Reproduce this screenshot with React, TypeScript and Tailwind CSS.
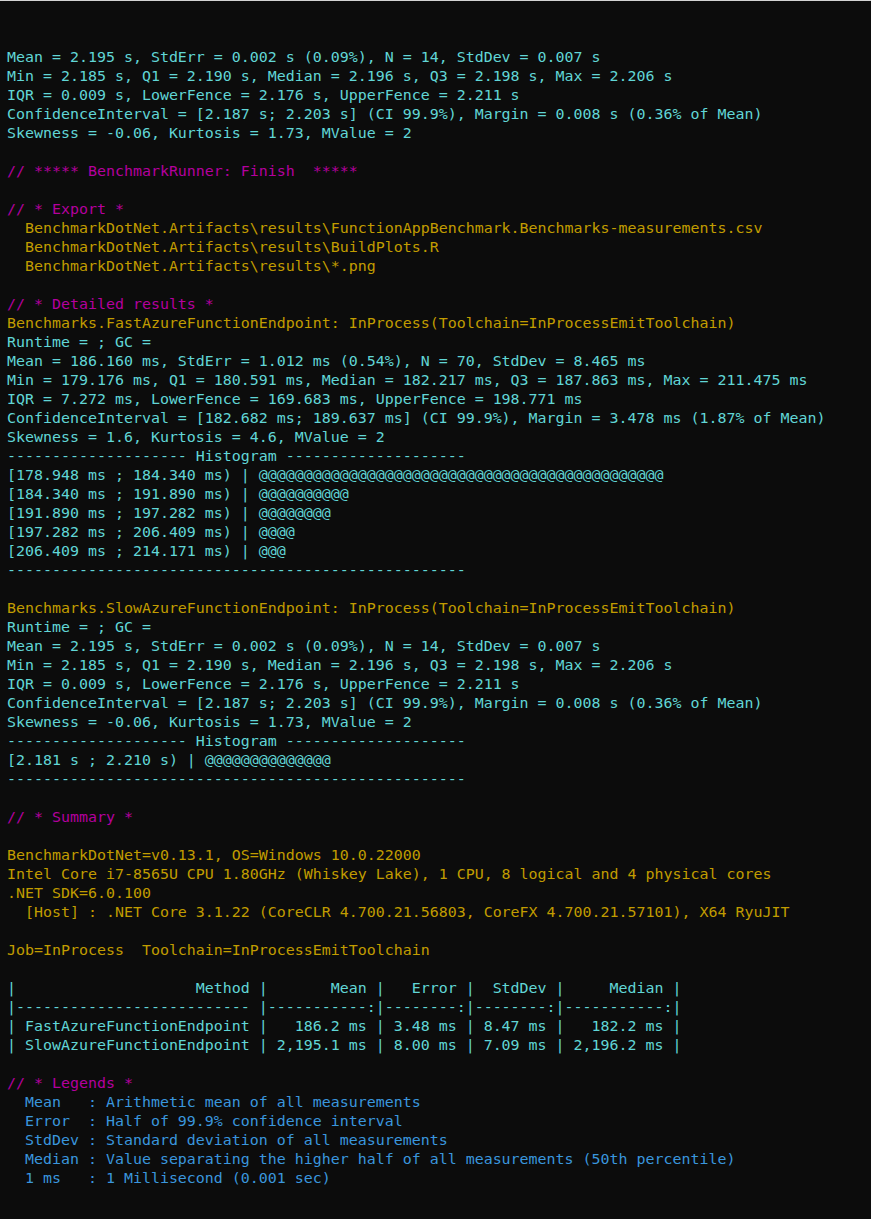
import React from "react";

const C = "text-[#61d6d6]";
const M = "text-[#b4009e]";
const Y = "text-[#c19c00]";
const B = "text-[#3a96dd]";

type L = [string, string];

const lines: L[] = [
  [C, "Mean = 2.195 s, StdErr = 0.002 s (0.09%), N = 14, StdDev = 0.007 s"],
  [C, "Min = 2.185 s, Q1 = 2.190 s, Median = 2.196 s, Q3 = 2.198 s, Max = 2.206 s"],
  [C, "IQR = 0.009 s, LowerFence = 2.176 s, UpperFence = 2.211 s"],
  [C, "ConfidenceInterval = [2.187 s; 2.203 s] (CI 99.9%), Margin = 0.008 s (0.36% of Mean)"],
  [C, "Skewness = -0.06, Kurtosis = 1.73, MValue = 2"],
  [C, ""],
  [M, "// ***** BenchmarkRunner: Finish  *****"],
  [C, ""],
  [M, "// * Export *"],
  [Y, "  BenchmarkDotNet.Artifacts\\results\\FunctionAppBenchmark.Benchmarks-measurements.csv"],
  [Y, "  BenchmarkDotNet.Artifacts\\results\\BuildPlots.R"],
  [Y, "  BenchmarkDotNet.Artifacts\\results\\*.png"],
  [C, ""],
  [M, "// * Detailed results *"],
  [Y, "Benchmarks.FastAzureFunctionEndpoint: InProcess(Toolchain=InProcessEmitToolchain)"],
  [C, "Runtime = ; GC = "],
  [C, "Mean = 186.160 ms, StdErr = 1.012 ms (0.54%), N = 70, StdDev = 8.465 ms"],
  [C, "Min = 179.176 ms, Q1 = 180.591 ms, Median = 182.217 ms, Q3 = 187.863 ms, Max = 211.475 ms"],
  [C, "IQR = 7.272 ms, LowerFence = 169.683 ms, UpperFence = 198.771 ms"],
  [C, "ConfidenceInterval = [182.682 ms; 189.637 ms] (CI 99.9%), Margin = 3.478 ms (1.87% of Mean)"],
  [C, "Skewness = 1.6, Kurtosis = 4.6, MValue = 2"],
  [C, "-------------------- Histogram --------------------"],
  [C, "[178.948 ms ; 184.340 ms) | " + "@".repeat(45)],
  [C, "[184.340 ms ; 191.890 ms) | " + "@".repeat(10)],
  [C, "[191.890 ms ; 197.282 ms) | " + "@".repeat(8)],
  [C, "[197.282 ms ; 206.409 ms) | " + "@".repeat(4)],
  [C, "[206.409 ms ; 214.171 ms) | " + "@".repeat(3)],
  [C, "-".repeat(51)],
  [C, ""],
  [Y, "Benchmarks.SlowAzureFunctionEndpoint: InProcess(Toolchain=InProcessEmitToolchain)"],
  [C, "Runtime = ; GC = "],
  [C, "Mean = 2.195 s, StdErr = 0.002 s (0.09%), N = 14, StdDev = 0.007 s"],
  [C, "Min = 2.185 s, Q1 = 2.190 s, Median = 2.196 s, Q3 = 2.198 s, Max = 2.206 s"],
  [C, "IQR = 0.009 s, LowerFence = 2.176 s, UpperFence = 2.211 s"],
  [C, "ConfidenceInterval = [2.187 s; 2.203 s] (CI 99.9%), Margin = 0.008 s (0.36% of Mean)"],
  [C, "Skewness = -0.06, Kurtosis = 1.73, MValue = 2"],
  [C, "-------------------- Histogram --------------------"],
  [C, "[2.181 s ; 2.210 s) | " + "@".repeat(14)],
  [C, "-".repeat(51)],
  [C, ""],
  [M, "// * Summary *"],
  [C, ""],
  [Y, "BenchmarkDotNet=v0.13.1, OS=Windows 10.0.22000"],
  [Y, "Intel Core i7-8565U CPU 1.80GHz (Whiskey Lake), 1 CPU, 8 logical and 4 physical cores"],
  [Y, ".NET SDK=6.0.100"],
  [Y, "  [Host] : .NET Core 3.1.22 (CoreCLR 4.700.21.56803, CoreFX 4.700.21.57101), X64 RyuJIT"],
  [C, ""],
  [Y, "Job=InProcess  Toolchain=InProcessEmitToolchain"],
  [C, ""],
  [C, "|                    Method |       Mean |   Error |  StdDev |     Median |"],
  [C, "|-------------------------- |-----------:|--------:|--------:|-----------:|"],
  [C, "| FastAzureFunctionEndpoint |   186.2 ms | 3.48 ms | 8.47 ms |   182.2 ms |"],
  [C, "| SlowAzureFunctionEndpoint | 2,195.1 ms | 8.00 ms | 7.09 ms | 2,196.2 ms |"],
  [C, ""],
  [M, "// * Legends *"],
  [B, "  Mean   : Arithmetic mean of all measurements"],
  [B, "  Error  : Half of 99.9% confidence interval"],
  [B, "  StdDev : Standard deviation of all measurements"],
  [B, "  Median : Value separating the higher half of all measurements (50th percentile)"],
  [B, "  1 ms   : 1 Millisecond (0.001 sec)"],
];

export default function App() {
  return (
    <div className="min-h-screen w-full bg-[#0c0c0c] border-t border-[#d4d4d4] pt-[47px] pl-[7px] font-['DejaVu_Sans_Mono',monospace] text-[14.95px] leading-[19px]">
      {lines.map(([cls, text], i) => (
        <div key={i} className={`${cls} whitespace-pre h-[19px]`}>
          {text}
        </div>
      ))}
    </div>
  );
}
